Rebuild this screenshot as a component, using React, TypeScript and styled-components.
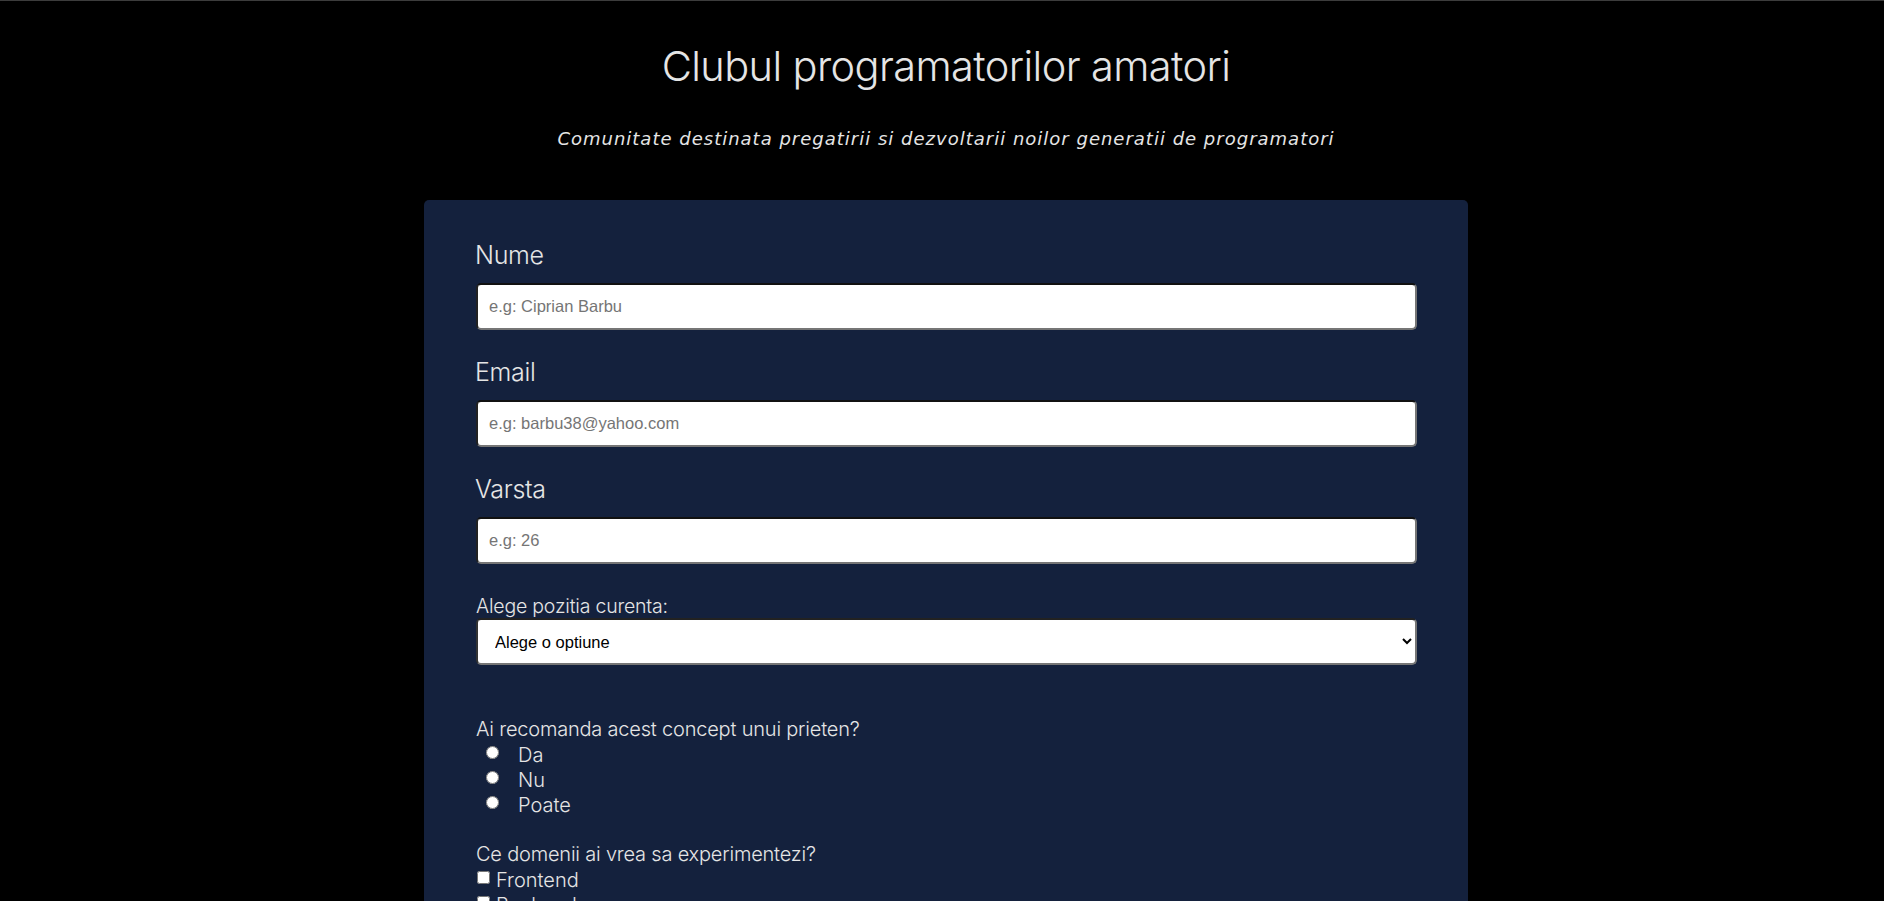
import React from "react";
import styled, { createGlobalStyle } from "styled-components";

const GlobalStyle = createGlobalStyle`
  html, body {
    margin: 0;
    padding: 0;
    background: #000000;
  }
  body {
    border-top: 1px solid #3c3c3c;
    font-family: "Inter", "Lato", sans-serif;
    color: #e5e5e5;
  }
`;

const Page = styled.div`
  display: flex;
  flex-direction: column;
  align-items: center;
  padding-left: 8px;
`;

const Header = styled.header`
  display: flex;
  flex-direction: column;
  align-items: center;
  padding-top: 40px;
`;

const Title = styled.h1`
  margin: 0;
  font-family: "Inter", sans-serif;
  font-weight: 300;
  font-size: 41.5px;
  line-height: 50px;
  letter-spacing: -0.6px;
  color: #e5e5e5;
`;

const Subtitle = styled.p`
  margin: 37px 0 0;
  font-family: "DejaVu Sans", "Verdana", sans-serif;
  font-style: italic;
  font-size: 18px;
  line-height: 22px;
  letter-spacing: 1px;
  color: #e5e5e5;
`;

const Card = styled.form`
  box-sizing: border-box;
  width: 1044px;
  margin-top: 50px;
  padding: 36px 51px 60px 52px;
  background: #14213d;
  border-radius: 5px;
  display: flex;
  flex-direction: column;
`;

const Field = styled.div<{ $gap?: number }>`
  display: flex;
  flex-direction: column;
  margin-top: ${(p) => p.$gap ?? 0}px;
`;

const BigLabel = styled.label`
  font-family: "Inter", sans-serif;
  font-weight: 300;
  font-size: 25px;
  line-height: 38px;
  letter-spacing: -0.3px;
  color: #e5e5e5;
  margin-bottom: 9px;
  margin-left: -1px;
`;

const SmallLabel = styled.label`
  font-family: "Inter", sans-serif;
  font-weight: 300;
  font-size: 19.5px;
  line-height: 22px;
  letter-spacing: -0.2px;
  color: #e5e5e5;
`;

const TextInput = styled.input`
  box-sizing: border-box;
  width: 100%;
  height: 47px;
  padding: 0 11px;
  border: 2px solid #767676;
  border-top-color: #111;
  border-left-color: #222;
  border-radius: 5px;
  background: #ffffff;
  font-family: "Liberation Sans", Arial, sans-serif;
  font-size: 16.5px;
  color: #000;
  outline: none;
  &::placeholder {
    color: #757575;
  }
`;

const Select = styled.select`
  box-sizing: border-box;
  width: 100%;
  height: 47px;
  margin-top: 1px;
  padding: 0 10px 0 13px;
  border: 2px solid #767676;
  border-top-color: #222;
  border-left-color: #333;
  border-radius: 5px;
  background: #ffffff;
  font-family: "Liberation Sans", Arial, sans-serif;
  font-size: 16.5px;
  color: #000;
  outline: none;
`;

const Group = styled.fieldset<{ $gap?: number }>`
  border: 0;
  padding: 0;
  margin: ${(p) => p.$gap ?? 0}px 0 0;
  display: flex;
  flex-direction: column;
`;

const Legend = styled.div`
  font-family: "Inter", sans-serif;
  font-weight: 300;
  font-size: 20px;
  line-height: 25px;
  letter-spacing: -0.2px;
  color: #e5e5e5;
`;

const RadioRow = styled.label`
  display: flex;
  align-items: center;
  height: 25px;
  padding-left: 10px;
  gap: 19px;
  font-family: "Inter", sans-serif;
  font-weight: 300;
  font-size: 20px;
  color: #e5e5e5;
`;

const Radio = styled.input`
  margin: 0;
  width: 13px;
  height: 13px;
  position: relative;
  top: -2px;
`;

const CheckRow = styled.label`
  display: flex;
  align-items: center;
  height: 25px;
  gap: 6px;
  font-family: "Inter", sans-serif;
  font-weight: 300;
  font-size: 20px;
  color: #e5e5e5;
`;

const Check = styled.input`
  margin: 0 0 0 1px;
  width: 13px;
  height: 13px;
  position: relative;
  top: -2px;
`;

const TextArea = styled.textarea`
  box-sizing: border-box;
  width: 100%;
  height: 120px;
  margin-top: 6px;
  padding: 10px 11px;
  border: 2px solid #767676;
  border-radius: 5px;
  font-family: "Liberation Sans", Arial, sans-serif;
  font-size: 16px;
`;

const Submit = styled.button`
  margin-top: 24px;
  height: 47px;
  border: 0;
  border-radius: 5px;
  background: #fca311;
  color: #14213d;
  font-family: "Inter", sans-serif;
  font-size: 18px;
`;

export default function App() {
  return (
    <>
      <GlobalStyle />
      <Page>
        <Header>
          <Title>Clubul programatorilor amatori</Title>
          <Subtitle>
            Comunitate destinata pregatirii si dezvoltarii noilor generatii de
            programatori
          </Subtitle>
        </Header>
        <Card onSubmit={(e) => e.preventDefault()}>
          <Field>
            <BigLabel htmlFor="name">Nume</BigLabel>
            <TextInput id="name" type="text" placeholder="e.g: Ciprian Barbu" />
          </Field>
          <Field $gap={23}>
            <BigLabel htmlFor="email">Email</BigLabel>
            <TextInput
              id="email"
              type="email"
              placeholder="e.g: barbu38@yahoo.com"
            />
          </Field>
          <Field $gap={23}>
            <BigLabel htmlFor="age">Varsta</BigLabel>
            <TextInput id="age" type="number" placeholder="e.g: 26" />
          </Field>
          <Field $gap={31}>
            <SmallLabel htmlFor="role">Alege pozitia curenta:</SmallLabel>
            <Select id="role" defaultValue="">
              <option value="" disabled>
                Alege o optiune
              </option>
              <option value="student">Student</option>
              <option value="junior">Junior</option>
              <option value="senior">Senior</option>
            </Select>
          </Field>
          <Group $gap={52}>
            <Legend>Ai recomanda acest concept unui prieten?</Legend>
            <RadioRow>
              <Radio type="radio" name="rec" value="da" />
              Da
            </RadioRow>
            <RadioRow>
              <Radio type="radio" name="rec" value="nu" />
              Nu
            </RadioRow>
            <RadioRow>
              <Radio type="radio" name="rec" value="poate" />
              Poate
            </RadioRow>
          </Group>
          <Group $gap={25}>
            <Legend>Ce domenii ai vrea sa experimentezi?</Legend>
            <CheckRow>
              <Check type="checkbox" value="frontend" />
              Frontend
            </CheckRow>
            <CheckRow>
              <Check type="checkbox" value="backend" />
              Backend
            </CheckRow>
            <CheckRow>
              <Check type="checkbox" value="fullstack" />
              Full Stack
            </CheckRow>
          </Group>
          <Field $gap={25}>
            <SmallLabel htmlFor="msg">Alte comentarii:</SmallLabel>
            <TextArea id="msg" />
          </Field>
          <Submit type="submit">Trimite</Submit>
        </Card>
      </Page>
    </>
  );
}
